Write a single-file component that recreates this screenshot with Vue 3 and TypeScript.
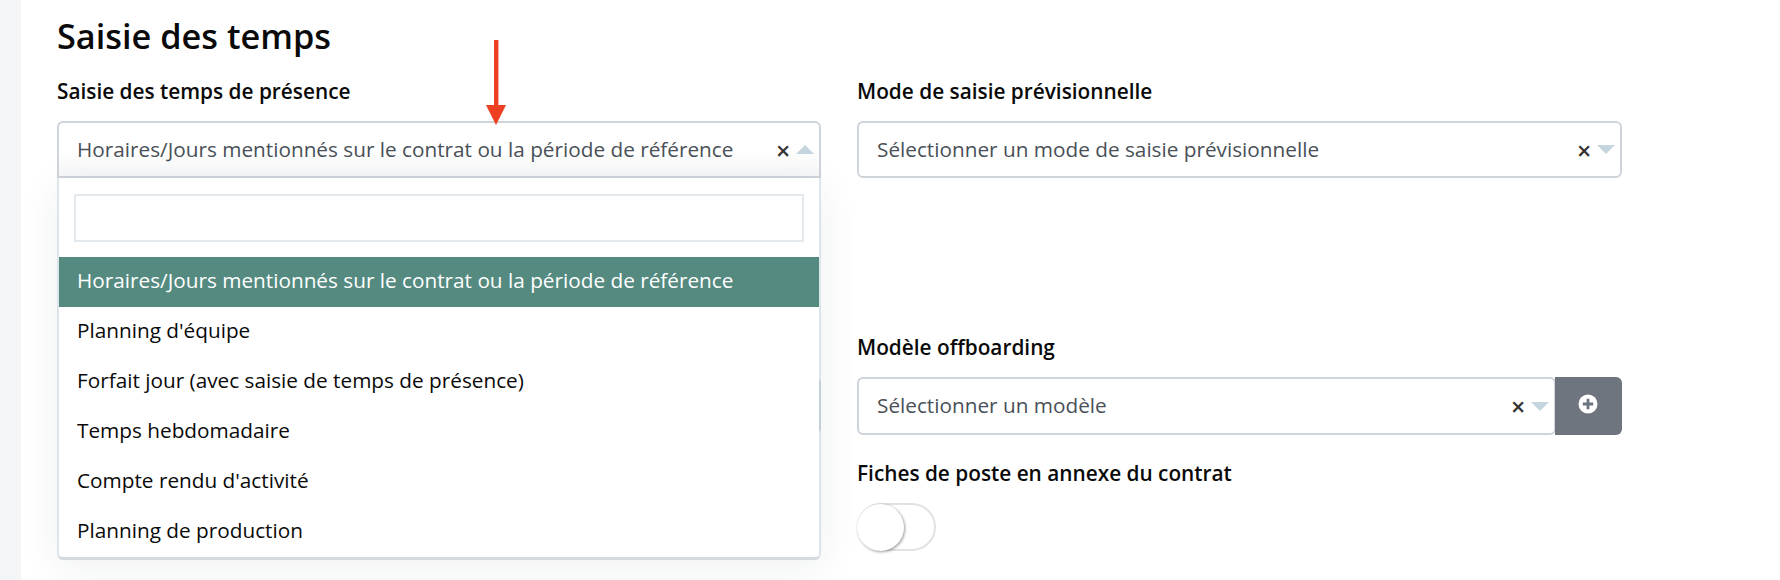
<script setup lang="ts">
const options: string[] = [
  'Horaires/Jours mentionnés sur le contrat ou la période de référence',
  "Planning d'équipe",
  'Forfait jour (avec saisie de temps de présence)',
  'Temps hebdomadaire',
  "Compte rendu d'activité",
  'Planning de production',
]
</script>

<template>
  <div class="page">
    <aside class="rail"></aside>
    <main class="main">
      <h1 class="title">Saisie des temps</h1>
      <div class="grid">
        <div class="field">
          <label class="label">Saisie des temps de présence</label>
          <div class="select open">
            <span class="value">{{ options[0] }}</span>
            <span class="clear">×</span>
            <span class="caret up"></span>
          </div>
          <div class="dropdown">
            <div class="search"><input class="search-input" type="text" /></div>
            <ul class="list">
              <li v-for="(o, i) in options" :key="o" class="option" :class="{ active: i === 0 }">{{ o }}</li>
            </ul>
          </div>
          <svg class="arrow" width="22" height="86" viewBox="0 0 22 86">
            <path d="M9 0h4.4v65H9z" fill="#ee3f23" />
            <path d="M1 65h20L11 85z" fill="#ee3f23" />
          </svg>
        </div>
        <div class="field">
          <label class="label">Mode de saisie prévisionnelle</label>
          <div class="select">
            <span class="value">Sélectionner un mode de saisie prévisionnelle</span>
            <span class="clear">×</span>
            <span class="caret"></span>
          </div>
        </div>
        <div class="field lower">
          <span class="label"></span>
          <div class="select ghost"></div>
        </div>
        <div class="field lower">
          <label class="label">Modèle offboarding</label>
          <div class="group">
            <div class="select in-group">
              <span class="value">Sélectionner un modèle</span>
              <span class="clear">×</span>
              <span class="caret"></span>
            </div>
            <button class="add" type="button" aria-label="Ajouter">
              <svg width="20" height="20" viewBox="0 0 20 20">
                <circle cx="10" cy="10" r="9.5" fill="#fff" />
                <path d="M8.6 4.8h2.8v3.8h3.8v2.8h-3.8v3.8H8.6v-3.8H4.8V8.6h3.8z" fill="#6e757e" />
              </svg>
            </button>
          </div>
          <label class="label toggle-label">Fiches de poste en annexe du contrat</label>
          <span class="toggle"><span class="knob"></span></span>
        </div>
      </div>
    </main>
  </div>
</template>

<style>
html, body { margin: 0; background: #fff; }
</style>

<style scoped>
.page {
  display: flex;
  width: 1780px;
  height: 580px;
  overflow: hidden;
  font-family: "Open Sans", "Liberation Sans", sans-serif;
  color: #0a0a0a;
}
.rail { width: 21px; flex: none; background: #f3f5f7; }
.main { flex: 1; padding: 17px 0 0 36px; }
.title {
  margin: 0 0 25px;
  font-size: 34.3px;
  line-height: 38px;
  font-weight: 600;
}
.grid {
  display: grid;
  grid-template-columns: 764px 765px;
  column-gap: 36px;
}
.field { position: relative; }
.lower { margin-top: 158px; }
.label {
  display: block;
  height: 24px;
  margin-bottom: 17px;
  font-size: 20.8px;
  line-height: 23px;
  font-weight: 600;
}
.select {
  display: flex;
  align-items: center;
  box-sizing: border-box;
  height: 57px;
  padding: 0 5px 0 18px;
  border: 2px solid #ced4da;
  border-radius: 6px;
  background: #fff;
  font-size: 20.75px;
  line-height: 24px;
  color: #495057;
}
.select.open {
  border-radius: 6px 6px 0 0;
  background: linear-gradient(#fff 50%, #f6f7f8);
}
.select.ghost { border-left-color: transparent; }
.value { flex: 1; white-space: nowrap; padding-bottom: 2px; }
.clear {
  width: 12px;
  margin-right: 8px;
  font-size: 25px;
  line-height: 20px;
  font-weight: 600;
  text-align: center;
  color: #333;
}
.caret {
  width: 0;
  height: 0;
  border-left: 9px solid transparent;
  border-right: 9px solid transparent;
  border-top: 9px solid #c5d5de;
}
.caret.up { border-top: 0; border-bottom: 9px solid #c5d5de; }
.dropdown {
  position: absolute;
  top: 98px;
  left: 0;
  right: 0;
  z-index: 2;
  box-sizing: border-box;
  height: 382px;
  background: #fff;
  background-clip: padding-box;
  border: 2px solid rgba(190, 207, 218, 0.5);
  border-top: 0;
  border-bottom: 3px solid #d3dae0;
  border-radius: 0 0 6px 6px;
  box-shadow: 0 8px 40px rgba(30, 40, 60, 0.07);
}
.search { padding: 16px 15px 15px; }
.search-input {
  display: block;
  box-sizing: border-box;
  width: 100%;
  height: 48px;
  padding: 0 8px;
  border: 2px solid #e3e9ed;
  outline: 0;
  background: #fff;
}
.list { margin: 0; padding: 0; list-style: none; }
.option {
  height: 50px;
  padding-left: 18px;
  font-size: 20.75px;
  line-height: 47px;
  white-space: nowrap;
  color: #0a0a0a;
}
.option.active { background: #548a80; color: #fff; }
.arrow { position: absolute; z-index: 3; left: 428px; top: -40px; }
.group { display: flex; }
.in-group {
  flex: 1;
  height: 58px;
}
.add {
  display: flex;
  align-items: center;
  justify-content: center;
  width: 67px;
  height: 58px;
  padding: 0 1px 5px 0;
  margin-left: -1px;
  border: 0;
  border-radius: 0 6px 6px 0;
  background: #6e757e;
}
.toggle-label { margin-top: 27px; }
.toggle {
  display: block;
  box-sizing: border-box;
  width: 79px;
  height: 48px;
  border: 2px solid #e2e2e2;
  border-radius: 24px;
  position: relative;
}
.knob {
  position: absolute;
  left: -2px;
  top: -1px;
  width: 47px;
  height: 47px;
  border-radius: 50%;
  background: #fff;
  box-shadow: 1px 1px 3px rgba(0, 0, 0, 0.4);
}
</style>
